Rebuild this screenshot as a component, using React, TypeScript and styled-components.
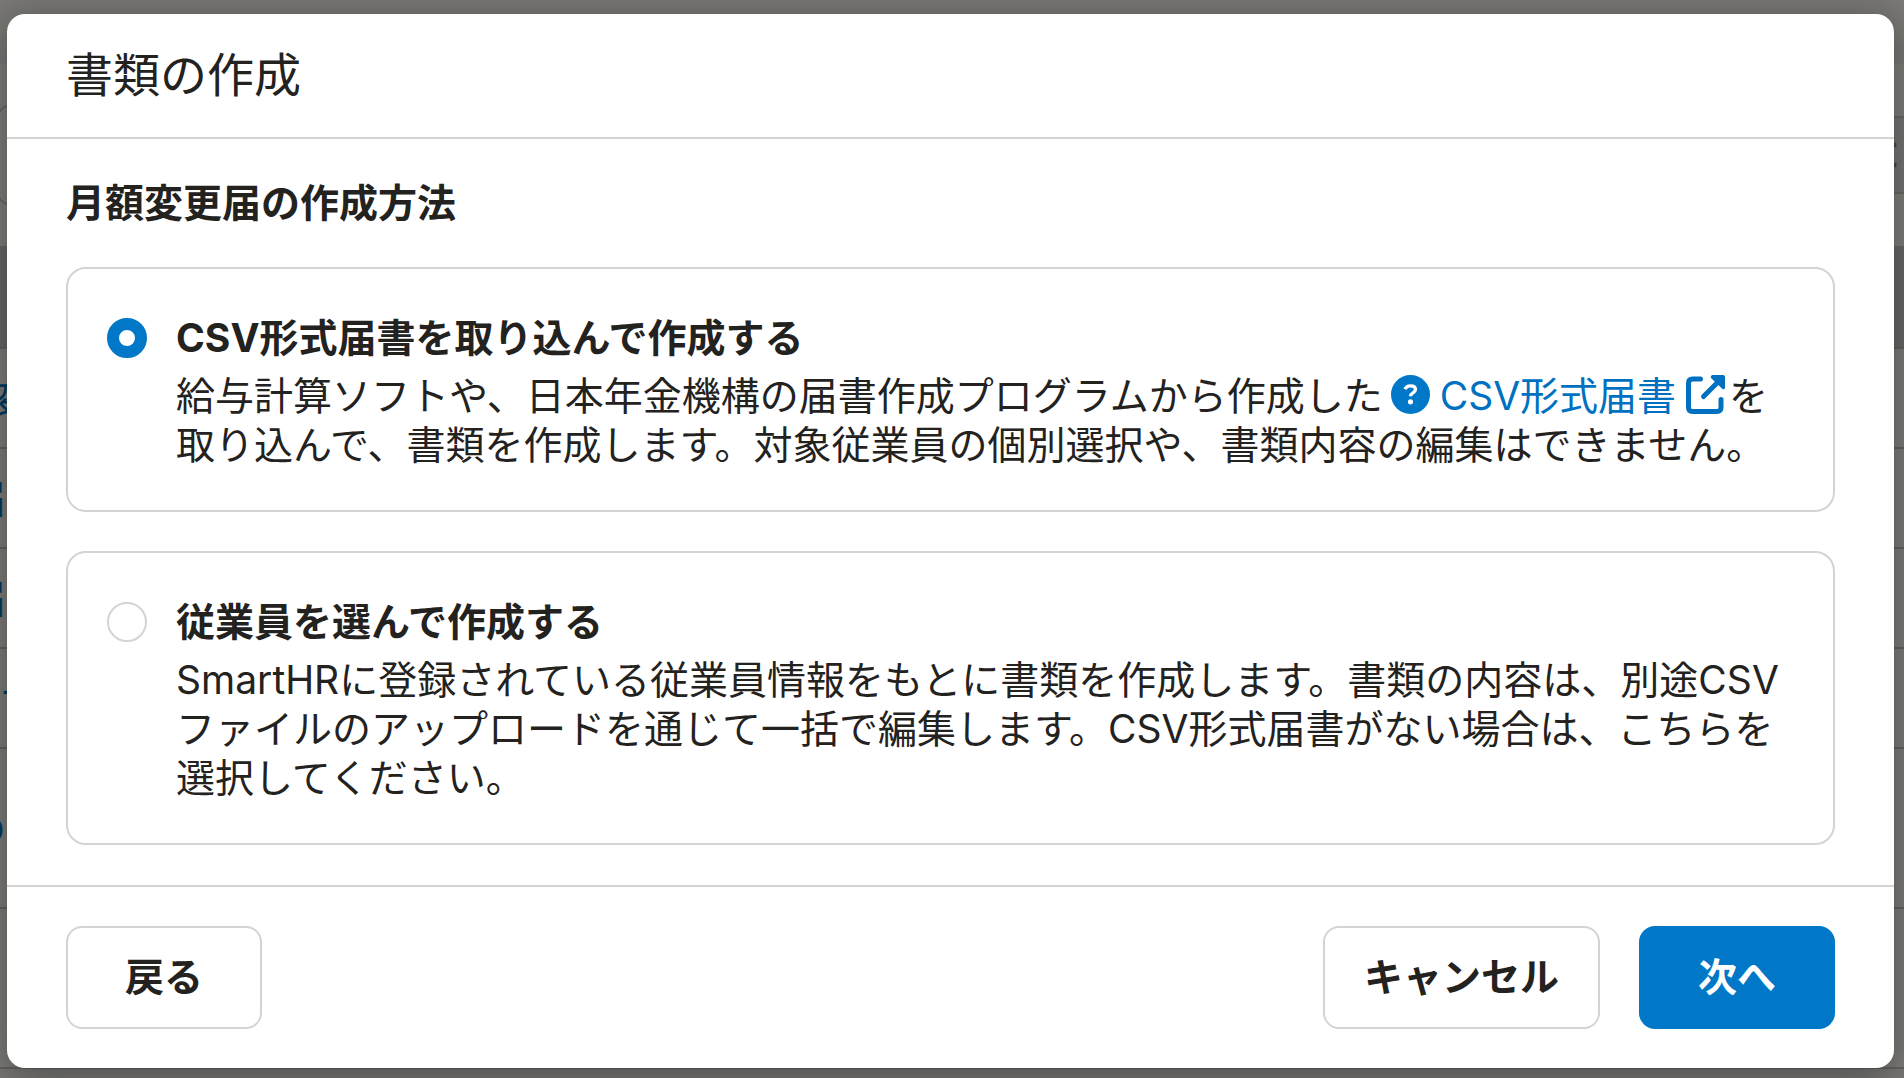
import React, { useState } from "react";
import styled, { createGlobalStyle } from "styled-components";

const GlobalStyle = createGlobalStyle`
  *, *::before, *::after { box-sizing: border-box; }
  body {
    margin: 0;
    background: #7b7a77;
    color: #23221e;
    font-family: Inter, "Noto Sans CJK JP", sans-serif;
    font-size: 39px;
    line-height: 49px;
  }
  h1, h2, p { margin: 0; }
`;

const Screen = styled.div`
  position: relative;
  display: flex;
  min-height: 100vh;
  padding: 14px 10px 10px 7px;
  overflow: hidden;
`;

const Behind = styled.div`
  position: absolute;
  inset: 0;
  overflow: hidden;
  padding-top: 64px;
`;

const BehindTools = styled.div`
  display: flex;
  align-items: center;
  justify-content: space-between;
  height: 182px;
  background: #80807d;
`;

const BehindButton = styled.div`
  width: 60px;
  height: 102px;
  margin-left: -4px;
  border: 2px solid #6b6a67;
  border-radius: 16px;
`;

const BehindSelect = styled.div`
  display: flex;
  align-items: center;
  justify-content: flex-end;
  width: 60px;
  height: 78px;
  padding-right: 6px;
  border: solid #6b6a67;
  border-width: 2px 0;
  background: #787775;
`;

const BehindHead = styled.div`
  height: 103px;
  background: #6c6a68;
  border-bottom: 2px solid #656462;
`;

const BehindRow = styled.div<{ $tall?: boolean }>`
  display: flex;
  align-items: center;
  height: ${(p) => (p.$tall ? 160 : 100)}px;
  border-bottom: 2px solid #656462;
  background: #7f7e7b;
  color: #003c64;
`;

const BehindLabel = styled.span<{ $end: number }>`
  display: flex;
  justify-content: flex-end;
  width: ${(p) => p.$end}px;
  white-space: nowrap;
`;

const Dialog = styled.section`
  position: relative;
  display: flex;
  flex-direction: column;
  flex: 1;
  border-radius: 18px;
  background: #fff;
  box-shadow: 0 8px 40px 4px rgba(0, 0, 0, 0.35);
`;

const Header = styled.header`
  padding: 31px 59px 33px;
  border-bottom: 2px solid #d6d3d0;
`;

const Title = styled.h1`
  font-size: 47px;
  font-weight: 400;
  line-height: 59px;
`;

const Body = styled.div`
  display: flex;
  flex-direction: column;
  gap: 39px;
  flex: 1;
  padding: 39px 59px;
`;

const SubTitle = styled.h2`
  font-size: 39px;
  font-weight: 700;
  line-height: 50px;
`;

const Card = styled.div`
  display: flex;
  gap: 29px;
  padding: 39px 39px 41px;
  border: 2px solid #d6d3d0;
  border-radius: 20px;
`;

const Radio = styled.input`
  appearance: none;
  flex: none;
  width: 40px;
  height: 40px;
  margin: 10px 0 0;
  border: 2px solid #d6d3d0;
  border-radius: 50%;
  background: #fff;
  &:checked {
    border: 12px solid #0077c7;
  }
`;

const CardText = styled.div`
  display: flex;
  flex-direction: column;
  gap: 9px;
  flex: 1;
`;

const CardLabel = styled.label`
  padding-top: 5px;
  font-weight: 700;
`;

const Link = styled.a`
  margin: 0 4px 0 8px;
  color: #0071c1;
  text-decoration: none;
  svg {
    width: 39px;
    height: 39px;
    vertical-align: -4px;
  }
  svg:first-child { margin-right: 10px; }
  svg:last-child { margin-left: 10px; }
`;

const Footer = styled.footer`
  display: flex;
  justify-content: space-between;
  padding: 39px 59px;
  border-top: 2px solid #d6d3d0;
`;

const Actions = styled.div`
  display: flex;
  gap: 39px;
`;

const Button = styled.button<{ $primary?: boolean }>`
  min-width: 196px;
  padding: 24px 39px 26px;
  border: 2px solid ${(p) => (p.$primary ? "#0077c7" : "#d6d3d0")};
  border-radius: 16px;
  background: ${(p) => (p.$primary ? "#0077c7" : "#fff")};
  color: ${(p) => (p.$primary ? "#fff" : "#23221e")};
  font: inherit;
  font-weight: 700;
`;

const QuestionIcon = () => (
  <svg viewBox="0 0 512 512" fill="#0077c7" aria-hidden="true">
    <circle cx="256" cy="256" r="256" />
    <path
      d="M185 188c10-34 31-46 70-46 42 0 66 20 66 48 0 45-65 42-65 88"
      fill="none"
      stroke="#fff"
      strokeWidth="44"
    />
    <circle cx="256" cy="352" r="34" fill="#fff" />
  </svg>
);

const ExternalIcon = () => (
  <svg viewBox="0 0 39 39" fill="none" stroke="currentColor" aria-hidden="true">
    <path
      d="M14.500 4H6.500Q2.500 4 2.500 8V32.500Q2.500 36.500 6.500 36.500H31Q35 36.500 35 32.500V24.500"
      strokeWidth="5"
      strokeLinecap="round"
    />
    <path d="M17.500 21.500L33 6" strokeWidth="5" strokeLinecap="round" />
    <path d="M26.500 0H37Q39 0 39 2V13Q38.500 15 36.500 14L25 3Q24 .500 26.500 0Z" fill="currentColor" stroke="none" />
  </svg>
);

const SortIcon = () => (
  <svg width="18" height="32" viewBox="0 0 18 32" fill="none" stroke="#4c4b49" strokeWidth="4" aria-hidden="true">
    <path d="M2 3l14 3-14 3M2 23l14 3-14 3" strokeLinecap="round" />
  </svg>
);

export default function App() {
  const [method, setMethod] = useState("csv");
  return (
    <>
      <GlobalStyle />
      <Screen>
        <Behind aria-hidden="true">
          <BehindTools>
            <BehindButton />
            <BehindSelect>
              <SortIcon />
            </BehindSelect>
          </BehindTools>
          <BehindHead />
          <BehindRow><BehindLabel $end={28}>変</BehindLabel></BehindRow>
          <BehindRow><BehindLabel $end={6}>届</BehindLabel></BehindRow>
          <BehindRow><BehindLabel $end={6}>届</BehindLabel></BehindRow>
          <BehindRow><BehindLabel $end={40}>サ</BehindLabel></BehindRow>
          <BehindRow $tall><BehindLabel $end={6}>の</BehindLabel></BehindRow>
          <BehindRow $tall />
        </Behind>
        <Dialog role="dialog" aria-labelledby="dialog-title">
          <Header>
            <Title id="dialog-title">書類の作成</Title>
          </Header>
          <Body>
            <SubTitle>月額変更届の作成方法</SubTitle>
            <Card>
              <Radio
                type="radio"
                name="method"
                id="method-csv"
                checked={method === "csv"}
                onChange={() => setMethod("csv")}
              />
              <CardText>
                <CardLabel htmlFor="method-csv">CSV形式届書を取り込んで作成する</CardLabel>
                <p>
                  給与計算ソフトや、日本年金機構の届書作成プログラムから作成した
                  <Link href="#csv">
                    <QuestionIcon />
                    CSV形式届書
                    <ExternalIcon />
                  </Link>
                  を取り込んで、書類を作成します。対象従業員の個別選択や、書類内容の編集はできません。
                </p>
              </CardText>
            </Card>
            <Card>
              <Radio
                type="radio"
                name="method"
                id="method-select"
                checked={method === "select"}
                onChange={() => setMethod("select")}
              />
              <CardText>
                <CardLabel htmlFor="method-select">従業員を選んで作成する</CardLabel>
                <p>
                  SmartHRに登録されている従業員情報をもとに書類を作成します。書類の内容は、別途CSVファイルのアップロードを通じて一括で編集します。CSV形式届書がない場合は、こちらを選択してください。
                </p>
              </CardText>
            </Card>
          </Body>
          <Footer>
            <Button type="button">戻る</Button>
            <Actions>
              <Button type="button">キャンセル</Button>
              <Button type="button" $primary>次へ</Button>
            </Actions>
          </Footer>
        </Dialog>
      </Screen>
    </>
  );
}
